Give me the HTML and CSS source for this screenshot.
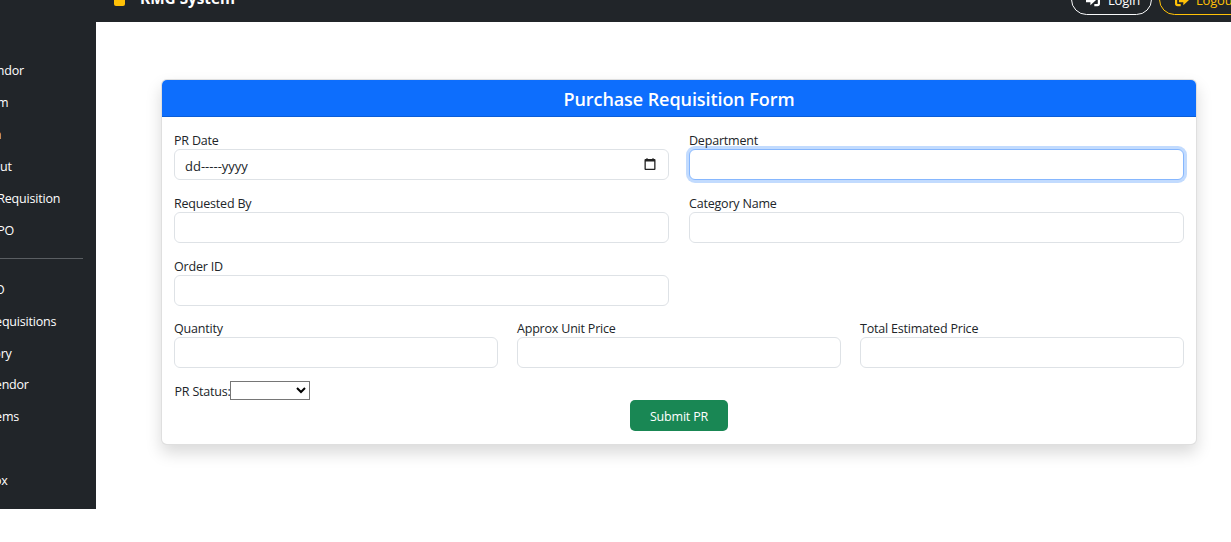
FILE: index.html
```html
<!DOCTYPE html>
<html lang="en">
<head>
<meta charset="utf-8">
<title>Purchase Requisition Form</title>
<link rel="stylesheet" href="styles.css">
</head>
<body>
<header class="topbar">
  <div class="brand">
    <span class="brand-mark"></span>
    <span class="brand-name">KMG System</span>
  </div>
  <div class="actions">
    <a class="pill pill-light"><svg class="pill-icon" viewBox="0 0 16 16" fill="currentColor"><path d="M5 2 11.500 8 5 14v-3.500H0v-5h5z"/><path d="M9.500 1H13a3 3 0 0 1 3 3v8a3 3 0 0 1-3 3H9.500v-2.500H13a.5.5 0 0 0 .5-.5V4a.5.5 0 0 0-.5-.5H9.500z"/></svg>Login</a>
    <a class="pill pill-warn"><svg class="pill-icon pill-icon-wide" viewBox="0 0 16 16" fill="currentColor"><path d="M9.500 2 16 8l-6.500 6v-3.500H4.500v-5h5z"/><path d="M6.500 1H3a3 3 0 0 0-3 3v8a3 3 0 0 0 3 3h3.500v-2.500H3a.5.5 0 0 1-.5-.5V4a.5.5 0 0 1 .5-.5h3.500z"/></svg>Logout</a>
  </div>
</header>
<div class="shell">
  <nav class="sidebar">
    <ul class="menu">
      <li>Add Vendor</li>
      <li>Add Item</li>
      <li>Stock In</li>
      <li>Stock Out</li>
      <li>Create Requisition</li>
      <li>Create PO</li>
    </ul>
    <hr class="divider">
    <ul class="menu menu-lower">
      <li>View PO</li>
      <li>View Requisitions</li>
      <li>Inventory</li>
      <li>View Vendor</li>
      <li>View Items</li>
      <li>Logout</li>
      <li>Dropbox</li>
    </ul>
  </nav>
  <main class="content">
    <form class="card">
      <h1 class="card-title">Purchase Requisition Form</h1>
      <div class="card-body">
        <div class="grid grid-2">
          <div class="field">
            <label class="label" for="prdate">PR Date</label>
            <div class="date-wrap">
              <input class="input input-date" id="prdate" type="text" value="dd-----yyyy">
              <svg class="date-icon" viewBox="0 0 12 12"><path fill="#222" fill-rule="evenodd" d="M2.500 0h1v1h5V0h1v1h1A1 1 0 0 1 11.500 2v9a1 1 0 0 1-1 1h-9a1 1 0 0 1-1-1V2a1 1 0 0 1 1-1h1zM1.800 3.500v7.200h8.400V3.500z"/></svg>
            </div>
          </div>
          <div class="field">
            <label class="label" for="dept">Department</label>
            <input class="input input-focus" id="dept" type="text">
          </div>
          <div class="field">
            <label class="label" for="reqby">Requested By</label>
            <input class="input" id="reqby" type="text">
          </div>
          <div class="field">
            <label class="label" for="cat">Category Name</label>
            <input class="input" id="cat" type="text">
          </div>
          <div class="field">
            <label class="label" for="order">Order ID</label>
            <input class="input" id="order" type="text">
          </div>
        </div>
        <div class="grid grid-3">
          <div class="field">
            <label class="label" for="qty">Quantity</label>
            <input class="input" id="qty" type="text">
          </div>
          <div class="field">
            <label class="label" for="unit">Approx Unit Price</label>
            <input class="input" id="unit" type="text">
          </div>
          <div class="field">
            <label class="label" for="total">Total Estimated Price</label>
            <input class="input" id="total" type="text">
          </div>
        </div>
        <div class="status">
          <label class="status-label" for="status">PR Status:</label><select class="select" id="status"><option></option><option>Pending</option><option>Approved</option></select>
        </div>
        <div class="submit-row">
          <button class="submit" type="button">Submit PR</button>
        </div>
      </div>
    </form>
  </main>
</div>
</body>
</html>
```
FILE: styles.css
```css
* { box-sizing: border-box; }
html, body { margin: 0; height: 100%; overflow: hidden; }
body {
  background: #fff;
  color: #212529;
  font-family: "Open Sans", "Noto Sans", "Liberation Sans", sans-serif;
  font-size: 12.500px;
  letter-spacing: -.2px;
}

.topbar {
  height: 22px;
  background: #212529;
  display: flex;
  justify-content: space-between;
  align-items: flex-end;
  overflow: hidden;
}
.brand {
  display: flex;
  align-items: center;
  gap: 15px;
  margin-left: 114px;
  margin-bottom: 14px;
  height: 20px;
}
.brand-mark {
  width: 11px;
  height: 16px;
  background: #ffc107;
  border-radius: 2px;
}
.brand-name { color: #fff; font-weight: 700; font-size: 15.300px; letter-spacing: 0; }
.actions {
  display: flex;
  gap: 7px;
  margin-right: -29px;
  margin-bottom: 7px;
}
.pill {
  height: 31px;
  border: 1px solid;
  border-radius: 16px;
  display: flex;
  align-items: center;
  gap: 8px;
  font-size: 13px;
}
.pill-light { color: #fff; border-color: #f8f9fa; width: 81px; padding-left: 14px; }
.pill-warn { color: #ffc107; width: 101px; padding-left: 14px; gap: 6px; }
.pill-icon { width: 14px; height: 14px; flex: none; }
.pill-icon-wide { width: 16px; }

.shell { display: flex; align-items: flex-start; }
.sidebar {
  flex: none;
  width: 96px;
  height: 487px;
  background: #212529;
  color: #fff;
  padding-top: 33px;
  overflow: hidden;
}
.menu {
  list-style: none;
  margin: 0 0 0 -43px;
  padding: 0;
  white-space: nowrap;
}
.menu li { height: 32px; line-height: 31px; }
.menu-lower { margin-left: -42px; }
.menu-lower li { height: 31.800px; }
.divider {
  width: 83px;
  height: 1px;
  margin: 11px 0 15px;
  border: 0;
  background: #5a5e62;
}

.content { flex: 1; min-width: 0; padding: 57px 34px 0 65px; }
.card {
  height: 366px;
  background: #fff;
  border: 1px solid rgba(0, 0, 0, .125);
  border-radius: 6px;
  box-shadow: 0 8px 16px rgba(0, 0, 0, .15);
  overflow: hidden;
}
.card-title {
  margin: 0;
  height: 37px;
  line-height: 38px;
  text-align: center;
  color: #fff;
  background: #0d6efd;
  border-bottom: 1px solid #0b5ed7;
  font-size: 18px;
  letter-spacing: -.08px;
  font-weight: 600;
}
.card-body { padding: 13.200px 12px 0; }
.grid { display: grid; }
.grid-2 { grid-template-columns: 1fr 1fr; column-gap: 20px; }
.grid-3 { grid-template-columns: 1fr 1fr 1fr; column-gap: 19px; }
.field { height: 62.750px; }
.label { display: block; height: 19px; line-height: 22px; }
.input {
  display: block;
  width: 100%;
  height: 31px;
  padding: 0 10px;
  border: 1px solid #dee2e6;
  border-radius: 6px;
  background: #fff;
  color: #212529;
  font: inherit;
  letter-spacing: inherit;
  outline: 0;
}
.input-date { padding-top: 2px; font-size: 13px; letter-spacing: 0; }
.input-focus {
  border-color: #86b7fe;
  box-shadow: 0 0 0 3px rgba(13, 110, 253, .25);
}
.date-wrap { position: relative; }
.date-icon {
  position: absolute;
  right: 13px;
  top: 9px;
  width: 12px;
  height: 12px;
}
.status { height: 19px; display: flex; align-items: center; padding-left: .5px; }
.status-label { padding-top: 2px; }
.select {
  width: 80px;
  height: 19px;
  margin-left: -.5px;
  background: #fff;
  border: 1px solid #767676;
  border-radius: 0;
  font: inherit;
}
.submit-row { display: flex; justify-content: center; }
.submit {
  width: 98px;
  height: 31px;
  padding-top: 2px;
  border: 0;
  border-radius: 5px;
  background: #198754;
  color: #fff;
  font: inherit;
  letter-spacing: inherit;
}
```
